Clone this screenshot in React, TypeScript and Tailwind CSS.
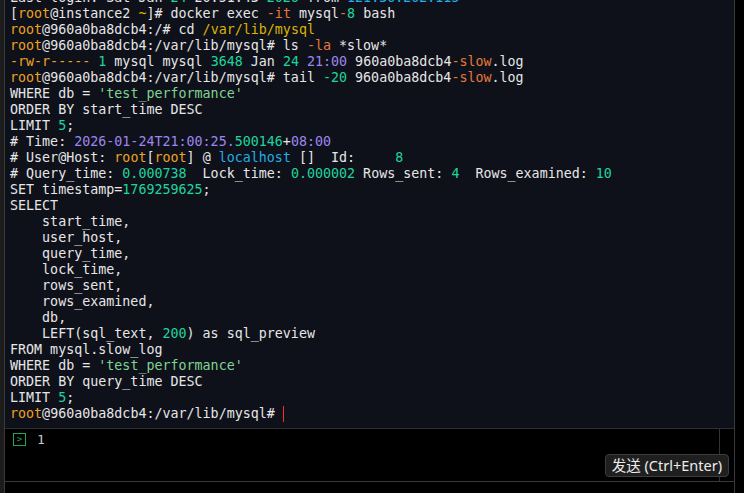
type Seg = [string, string?];

const W = "text-[#e6e6e6]";
const OR = "text-[#eea326]";
const RD = "text-[#e8783a]";
const YL = "text-[#dcb400]";
const GN = "text-[#1ed69c]";
const PU = "text-[#9c86ef]";
const ST = "text-[#7fd494]";
const CY = "text-[#22aee4]";

const prompt = (path: string): Seg[] => [
  ["root", OR],
  [`@960a0ba8dcb4:${path}# `],
];

const lines: Seg[][] = [
  [["Last login: Sat Jan "], ["24", GN], [" 20:51:43 "], ["2026", GN], [" from "], ["121.36.202.115", CY]],
  [["["], ["root", OR], ["@instance2 "], ["~", YL], ["]# docker exec "], ["-it", RD], [" mysql"], ["-", RD], ["8", GN], [" bash"]],
  [...prompt("/"), ["cd "], ["/var/lib/mysql", YL]],
  [...prompt("/var/lib/mysql"), ["ls "], ["-la", RD], [" *slow*"]],
  [["-rw-r-----", OR], [" "], ["1", GN], [" mysql mysql "], ["3648", GN], [" Jan "], ["24", GN], [" "], ["21:00", PU], [" 960a0ba8dcb4"], ["-slow", RD], [".log"]],
  [...prompt("/var/lib/mysql"), ["tail "], ["-20", GN], [" 960a0ba8dcb4"], ["-slow", RD], [".log"]],
  [["WHERE db = "], ["'test_performance'", ST]],
  [["ORDER BY start_time DESC"]],
  [["LIMIT "], ["5", GN], [";"]],
  [["# Time: "], ["2026-01-24T21:00:25.", PU], ["500146", GN], ["+"], ["08:00", PU]],
  [["# User@Host: "], ["root", OR], ["["], ["root", OR], ["] @ "], ["localhost", CY], [" []  Id:     "], ["8", GN]],
  [["# Query_time: "], ["0.000738", GN], ["  Lock_time: "], ["0.000002", GN], [" Rows_sent: "], ["4", GN], ["  Rows_examined: "], ["10", GN]],
  [["SET timestamp="], ["1769259625", GN], [";"]],
  [["SELECT"]],
  [["    start_time,"]],
  [["    user_host,"]],
  [["    query_time,"]],
  [["    lock_time,"]],
  [["    rows_sent,"]],
  [["    rows_examined,"]],
  [["    db,"]],
  [["    LEFT(sql_text, "], ["200", GN], [") as sql_preview"]],
  [["FROM mysql.slow_log"]],
  [["WHERE db = "], ["'test_performance'", ST]],
  [["ORDER BY query_time DESC"]],
  [["LIMIT "], ["5", GN], [";"]],
];

export default function App() {
  return (
    <div className="w-[744px] h-[493px] bg-black flex overflow-hidden">
      <div className="w-[5px] h-full bg-[#1c1c1c] border-r border-[#3a3a3a]" />
      <div className="w-[729px] h-full flex flex-col">
        {/* terminal output, scrolled to the bottom */}
        <div className="h-[429px] bg-[#0f111a] border-b border-[#2e2e33] overflow-hidden flex flex-col justify-end pl-[5px] pb-[6px] font-['DejaVu_Sans_Mono',monospace] text-[13.33px] leading-[16px] whitespace-pre">
          {lines.map((l, i) => (
            <div key={i} className="h-[16px]">
              {l.map(([t, c], j) => (
                <span key={j} className={c ?? W}>
                  {t}
                </span>
              ))}
            </div>
          ))}
          <div className="h-[16px] flex items-center">
            {prompt("/var/lib/mysql").map(([t, c], j) => (
              <span key={j} className={c ?? W}>
                {t}
              </span>
            ))}
            <span className="inline-block w-[1px] h-[16px] bg-[#ff2b2b]" />
          </div>
        </div>

        {/* command input */}
        <div className="relative h-[53px] border-b border-[#3a3a3a]">
          <div className="w-[715px] h-full border-r border-[#333] flex items-start pt-[4px] pl-[8px] gap-[11px]">
            <div className="w-[13px] h-[13px] border border-[#23a35c] flex items-center justify-center text-[#23a35c] text-[9px] leading-none font-['DejaVu_Sans_Mono',monospace]">
              &gt;
            </div>
            <span className="text-[#c8c8c8] text-[13px] leading-[14px] font-['DejaVu_Sans_Mono',monospace]">1</span>
          </div>
          <button className="absolute right-[5px] bottom-[4px] h-[23px] px-[6px] rounded-[4px] bg-[#1f1f1f] border border-[#3c3c3c] text-[#ececec] text-[14.5px] leading-none font-['Noto_Sans','Noto_Sans_CJK_SC',sans-serif]">
            发送 (Ctrl+Enter)
          </button>
        </div>
        <div className="flex-1" />
      </div>
      <div className="flex-1 border-l border-[#3a3a3a]" />
    </div>
  );
}
